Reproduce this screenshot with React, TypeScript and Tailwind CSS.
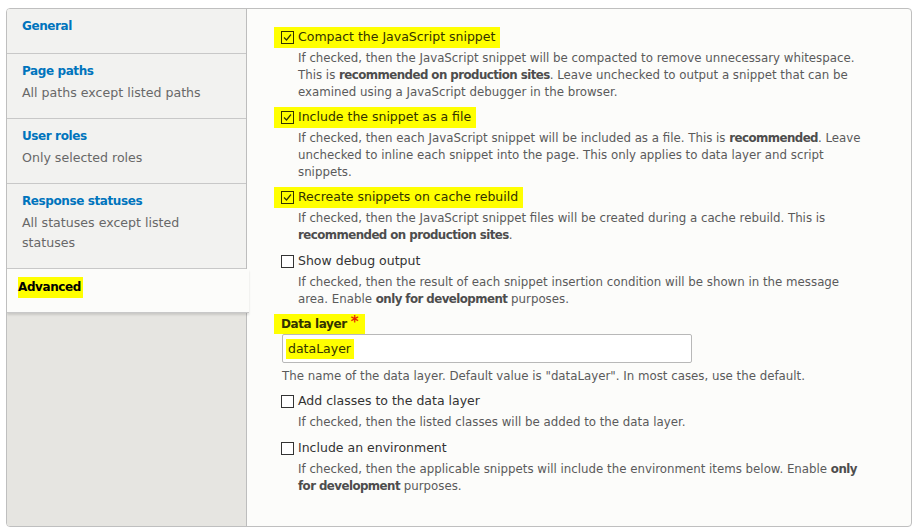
import React from "react";

const font = { fontFamily: '"DejaVu Sans", "Liberation Sans", sans-serif' };

function Box({ checked, hl }: { checked?: boolean; hl?: boolean }) {
  const c = hl ? "#333300" : "#333333";
  return (
    <svg width="13" height="13" viewBox="0 0 13 13" className="shrink-0">
      <rect x="0.5" y="0.5" width="12" height="12" fill={hl ? "none" : "#fff"} stroke={c} strokeWidth="1" />
      {checked && <path d="M3 6.5 L5.5 9 L10 3.5" fill="none" stroke={c} strokeWidth="1.2" />}
    </svg>
  );
}

function B({ children }: { children: React.ReactNode }) {
  return <b className="text-[#4d4d4d] tracking-[-0.55px]">{children}</b>;
}

function Item({
  label,
  checked,
  hl,
  children,
}: {
  label: string;
  checked?: boolean;
  hl?: boolean;
  children: React.ReactNode;
}) {
  return (
    <div>
      <div className="flex">
        <div
          className={`flex items-center h-[21px] pl-[7px] whitespace-nowrap ${hl ? "bg-[#ffff00] pr-[5px]" : ""}`}
        >
          <Box checked={checked} hl={hl} />
          <span className={`ml-[4px] text-[12.5px] ${hl ? "text-[#333300]" : "text-[#333333]"}`}>{label}</span>
        </div>
      </div>
      <div className="pl-[24px] mt-[2px] text-[11.8px] leading-[17px] text-[#5a5a5a] whitespace-nowrap">{children}</div>
    </div>
  );
}

const title = "text-[12px] tracking-[-0.4px] leading-[20px] font-bold text-[#0074bd]";
const sub = "text-[12.6px] leading-[20px] mt-[2px] text-[#686868]";

export default function App() {
  return (
    <div className="w-[917px] h-[532px] bg-white pt-[8px] pl-[6px]" style={font}>
      <div className="w-[906px] h-[519px] border border-[#bfbfbf] rounded-[4px] flex overflow-hidden bg-[#fcfcfa]">
        <div className="w-[240px] shrink-0 bg-[#e6e5e1] border-r border-[#bdbdbd] flex flex-col">
          <div className="h-[45px] bg-[#f2f2f0] border-b border-[#c8c8c8] pl-[15px] pt-[7px]">
            <div className={title}>General</div>
          </div>
          <div className="h-[65px] bg-[#f2f2f0] border-b border-[#c8c8c8] pl-[15px] pt-[7px]">
            <div className={title}>Page paths</div>
            <div className={sub}>All paths except listed paths</div>
          </div>
          <div className="h-[65px] bg-[#f2f2f0] border-b border-[#c8c8c8] pl-[15px] pt-[7px]">
            <div className={title}>User roles</div>
            <div className={sub}>Only selected roles</div>
          </div>
          <div className="h-[85px] bg-[#f2f2f0] border-b border-[#c8c8c8] pl-[15px] pt-[7px]">
            <div className={title}>Response statuses</div>
            <div className={sub}>
              All statuses except listed
              <br />
              statuses
            </div>
          </div>
          <div className="relative h-[44px] w-[242px] bg-[#fcfcfa] border-b border-[#c8c8c8] shadow-[0_2px_2px_rgba(0,0,0,0.12)] pl-[11px] pt-[5px]">
            <span className="text-[12px] tracking-[-0.4px] leading-[21px] font-bold text-black bg-[#ffff00] inline-block pr-[2px]">Advanced</span>
          </div>
        </div>
        <div className="flex-1 pl-[27px] pt-[18px] flex flex-col">
          <Item label="Compact the JavaScript snippet" checked hl>
            If checked, then the JavaScript snippet will be compacted to remove unnecessary whitespace.
            <br />
            This is <B>recommended on production sites</B>. Leave unchecked to output a snippet that can be
            <br />
            examined using a JavaScript debugger in the browser.
          </Item>
          <div className="h-[6px]" />
          <Item label="Include the snippet as a file" checked hl>
            If checked, then each JavaScript snippet will be included as a file. This is{" "}
            <B>recommended</B>. Leave
            <br />
            unchecked to inline each snippet into the page. This only applies to data layer and script
            <br />
            snippets.
          </Item>
          <div className="h-[6px]" />
          <Item label="Recreate snippets on cache rebuild" checked hl>
            If checked, then the JavaScript snippet files will be created during a cache rebuild. This is
            <br />
            <B>recommended on production sites</B>.
          </Item>
          <div className="h-[7px]" />
          <Item label="Show debug output">
            If checked, then the result of each snippet insertion condition will be shown in the message
            <br />
            area. Enable <B>only for development</B> purposes.
          </Item>
          <div className="h-[6px]" />
          <div className="flex">
            <div className="bg-[#ffff00] pl-[7px] pr-[6px] h-[20px] flex items-center">
              <span className="text-[12px] tracking-[-0.4px] font-bold text-[#333300]">Data layer</span>
              <span className="text-[15px] font-bold text-[#e62600] ml-[4px] leading-[10px] relative top-[-2px]">*</span>
            </div>
          </div>
          <div className="ml-[8px] w-[410px] h-[29px] bg-white border border-[#b8b8b8] rounded-[2px] flex items-center pl-[3px]">
            <span className="bg-[#ffff00] text-[12.5px] text-[#333300] pl-[2px] pr-[3px] leading-[20px]">dataLayer</span>
          </div>
          <div className="ml-[8px] mt-[5px] text-[11.8px] leading-[17px] text-[#5a5a5a] whitespace-nowrap">
            The name of the data layer. Default value is "dataLayer". In most cases, use the default.
          </div>
          <div className="h-[6px]" />
          <Item label="Add classes to the data layer">
            If checked, then the listed classes will be added to the data layer.
          </Item>
          <div className="h-[7px]" />
          <Item label="Include an environment">
            If checked, then the applicable snippets will include the environment items below. Enable{" "}
            <B>only</B>
            <br />
            <B>for development</B> purposes.
          </Item>
        </div>
      </div>
    </div>
  );
}
